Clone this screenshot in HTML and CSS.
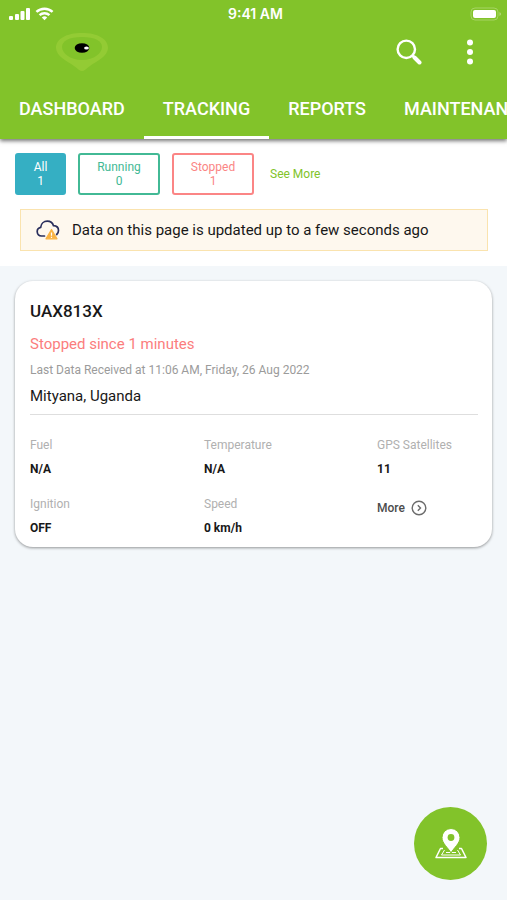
FILE: index.html
```html
<!DOCTYPE html>
<html lang="en">
<head>
<meta charset="utf-8">
<meta name="viewport" content="width=device-width, initial-scale=1">
<title>Tracking</title>
<link rel="stylesheet" href="styles.css">
</head>
<body>
<header class="header">
  <div class="status">
    <div class="status-signal">
      <svg width="22" height="14" viewBox="0 0 22 14" fill="#fff" aria-hidden="true"><rect x="0" y="9" width="4" height="4" rx="1"/><rect x="6" y="7" width="4" height="6" rx="1"/><rect x="11.500" y="4" width="4" height="9" rx="1"/><rect x="17" y="1" width="4" height="12" rx="1"/></svg>
      <svg width="19" height="14" viewBox="0 0 20 14" fill="none" stroke="#fff" stroke-width="2.6" aria-hidden="true"><path d="M1.5 4.800a12.3 12.3 0 0 1 17 0M4.8 8.200a7.6 7.6 0 0 1 10.4 0"/><path d="M10 13.5L7.2 10.8a4 4 0 0 1 5.6 0z" fill="#fff" stroke="none"/></svg>
    </div>
    <span class="status-time">9:41 AM</span>
    <svg class="battery" width="32" height="15" viewBox="0 0 32 15" aria-hidden="true"><rect x="1" y="1" width="27" height="12" rx="4" fill="none" stroke="#a5d462"/><rect x="3" y="3" width="23" height="8" rx="2" fill="#fff"/><path d="M29.5 5v4c2-1 2-3 0-4z" fill="#b5da7c"/></svg>
  </div>
  <div class="appbar">
    <svg class="logo" width="54" height="40" viewBox="0 0 54 40" role="img" aria-label="Logo"><path d="M27 1C11 1 1 7 1 16c0 8 11 13 18 18 4 3 6 5 8 5s4-2 8-5c7-5 18-10 18-18C53 7 43 1 27 1z" fill="#93cb34"/><path d="M27 5C14 5 7 9 7 15c0 6 8 13 20 13s20-7 20-13c0-6-7-10-20-10z" fill="#82c32a"/><ellipse cx="27" cy="16" rx="7.3" ry="4.8"/><ellipse cx="31.5" cy="16" rx="2.4" ry="1.5" fill="#fff"/></svg>
    <div class="actions">
      <button class="icon-button" aria-label="Search"><svg width="26" height="26" viewBox="0 0 26 26" fill="none" stroke="#fff" aria-hidden="true"><circle cx="10.3" cy="10.3" r="8.7" stroke-width="2.4"/><path d="M16.5 16.5l2 2" stroke-width="2.6"/><path d="M18.5 18.5l5 5" stroke-width="4" stroke-linecap="round"/></svg></button>
      <button class="icon-button" aria-label="Menu"><svg width="8" height="26" viewBox="0 0 8 26" fill="#fff" aria-hidden="true"><circle cx="4" cy="3.5" r="3"/><circle cx="4" cy="13" r="3"/><circle cx="4" cy="22.5" r="3"/></svg></button>
    </div>
  </div>
  <nav class="tabs">
    <a class="tab" href="#dashboard">DASHBOARD</a>
    <a class="tab tab-active" href="#tracking" aria-current="page">TRACKING</a>
    <a class="tab" href="#reports">REPORTS</a>
    <a class="tab" href="#maintenance">MAINTENANCE</a>
  </nav>
</header>
<section class="filters">
  <div class="chips">
    <button class="chip chip-all">All<br>1</button>
    <button class="chip chip-running">Running<br>0</button>
    <button class="chip chip-stopped">Stopped<br>1</button>
    <a class="see-more" href="#more">See More</a>
  </div>
  <div class="notice">
    <svg width="24" height="20" viewBox="0 0 24 20" aria-hidden="true"><path d="M8.5 16H5.500a4.400 4.400 0 0 1-.8-8.700C5 3.500 8 1.200 11.300 1.200c3 0 5.300 1.700 6.200 4.500 3 .2 5 2.200 5 4.800 0 1.700-.7 3-1.800 4" fill="none" stroke="#292e5c" stroke-width="1.700" stroke-linecap="round"/><path d="M15.500 9.500l5.500 9.300H10z" fill="#f9b343" stroke="#f9b343" stroke-width="1.200" stroke-linejoin="round"/><path d="M15.500 12.500v3.300M15.500 16.800v1.200" stroke="#fff" stroke-width="1.200"/></svg>
    <span>Data on this page is updated up to a few seconds ago</span>
  </div>
</section>
<main class="main">
  <article class="card">
    <h1 class="plate">UAX813X</h1>
    <p class="state">Stopped since 1 minutes</p>
    <p class="received">Last Data Received at 11:06 AM, Friday, 26 Aug 2022</p>
    <p class="place">Mityana, Uganda</p>
    <dl class="stats">
      <div><dt>Fuel</dt><dd>N/A</dd></div>
      <div><dt>Temperature</dt><dd>N/A</dd></div>
      <div><dt>GPS Satellites</dt><dd>11</dd></div>
      <div><dt>Ignition</dt><dd>OFF</dd></div>
      <div><dt>Speed</dt><dd>0 km/h</dd></div>
      <div><dd class="more-cell"><a class="more" href="#details">More <svg width="16" height="16" viewBox="0 0 16 16" fill="none" stroke="#6c6c6c" stroke-width="1.400" aria-hidden="true"><circle cx="8" cy="8" r="6.800"/><path d="M6.800 5.300L9.500 8l-2.700 2.700"/></svg></a></dd></div>
    </dl>
  </article>
</main>
<button class="fab" aria-label="Show map"><svg width="34" height="32" viewBox="0 0 34 32" aria-hidden="true"><path d="M9 20.500H6.500L2 29.500h30l-4.500-9H25" fill="none" stroke="#fff" stroke-width="1.500" stroke-linejoin="round"/><path d="M10.500 22l-3 5h19l-3-5M12 24.500h10" fill="none" stroke="#fff"/><path d="M17 25C14 19.500 8 15.500 8 9.500a9 9 0 0 1 18 0C26 15.500 20 19.500 17 25z" fill="#fff" stroke="#82c32a"/><circle cx="17" cy="9.500" r="3.400" fill="#82c32a"/></svg></button>
</body>
</html>
```
FILE: styles.css
```css
* { box-sizing: border-box; }

body {
  margin: 0;
  min-height: 100vh;
  background: #f3f7fa;
  color: #181818;
  font-family: Roboto, sans-serif;
  overflow-x: hidden;
}

button { font: inherit; cursor: pointer; }
a { text-decoration: none; }
svg { display: block; flex: none; }
h1, p, dl, dd { margin: 0; }

.header {
  position: relative;
  background: #82c32a;
  color: #fff;
  box-shadow: 0 2px 4px rgba(0, 0, 0, 0.55);
}

.status {
  display: grid;
  grid-template-columns: 1fr auto 1fr;
  align-items: center;
  height: 28px;
  padding: 0 5px 0 9px;
}

.status-signal { display: flex; gap: 4px; }
.status-time { font: 600 14px/16px Inter, sans-serif; }
.battery { justify-self: end; }

.appbar {
  display: flex;
  align-items: center;
  justify-content: space-between;
  height: 48px;
  padding: 0 33px 0 55px;
}

.actions { display: flex; gap: 44px; }

.icon-button {
  display: flex;
  padding: 0;
  border: 0;
  background: none;
}

.tabs {
  display: flex;
  height: 63px;
  overflow: hidden;
}

.tab {
  flex: none;
  padding: 22px 19px 0;
  border-bottom: 3px solid transparent;
  color: #fff;
  font-size: 18px;
  font-weight: 500;
  line-height: 22px;
}

.tab-active { border-color: #fff; }

.filters {
  padding: 14px 19px 15px 15px;
  background: #fff;
}

.chips {
  display: flex;
  align-items: center;
  gap: 12px;
}

.chip {
  min-width: 82px;
  height: 42px;
  padding: 0;
  border: 2px solid;
  border-radius: 3px;
  background: #fff;
  font-size: 12px;
  line-height: 14px;
}

.chip-all {
  min-width: 51px;
  border-color: #35afc3;
  background: #35afc3;
  color: #fff;
}

.chip-running { color: #42b995; }
.chip-stopped { color: #fb8585; }

.see-more {
  margin-left: 4px;
  color: #82c32a;
  font-size: 12px;
}

.notice {
  display: flex;
  align-items: center;
  gap: 12px;
  height: 42px;
  margin: 14px 0 0 5px;
  padding: 0 15px;
  border: 1px solid #fae3ae;
  background: #fef8ee;
  font-size: 15px;
}

.main { padding: 15px; }

.card {
  padding: 18px 14px 7px 15px;
  border-radius: 18px;
  background: #fff;
  box-shadow: 0 1px 3px rgba(0, 0, 0, 0.4);
}

.plate {
  font-size: 17px;
  font-weight: 500;
  line-height: 24px;
}

.state {
  margin-top: 9px;
  color: #fb7d7d;
  font-size: 15px;
  line-height: 24px;
}

.received {
  margin-top: 4px;
  color: #9b9b9b;
  font-size: 12px;
  line-height: 20px;
}

.place {
  margin-top: 4px;
  padding-bottom: 6px;
  border-bottom: 1px solid #dedede;
  font-size: 15px;
  line-height: 24px;
}

.stats {
  display: grid;
  grid-template-columns: 174fr 173fr 101fr;
  gap: 11px 0;
  margin-top: 18px;
  font-size: 12px;
  line-height: 24px;
}

.stats dt { color: #b0b0b0; }
.stats dd { font-weight: 700; }
.stats .more-cell { padding-top: 4px; font-weight: 500; }

.more {
  display: flex;
  align-items: center;
  gap: 6px;
  color: #4c4c4c;
}

.fab {
  position: fixed;
  right: 20px;
  bottom: 20px;
  display: grid;
  place-items: center;
  width: 73px;
  height: 73px;
  padding: 0;
  border: 0;
  border-radius: 50%;
  background: #82c32a;
}
```
